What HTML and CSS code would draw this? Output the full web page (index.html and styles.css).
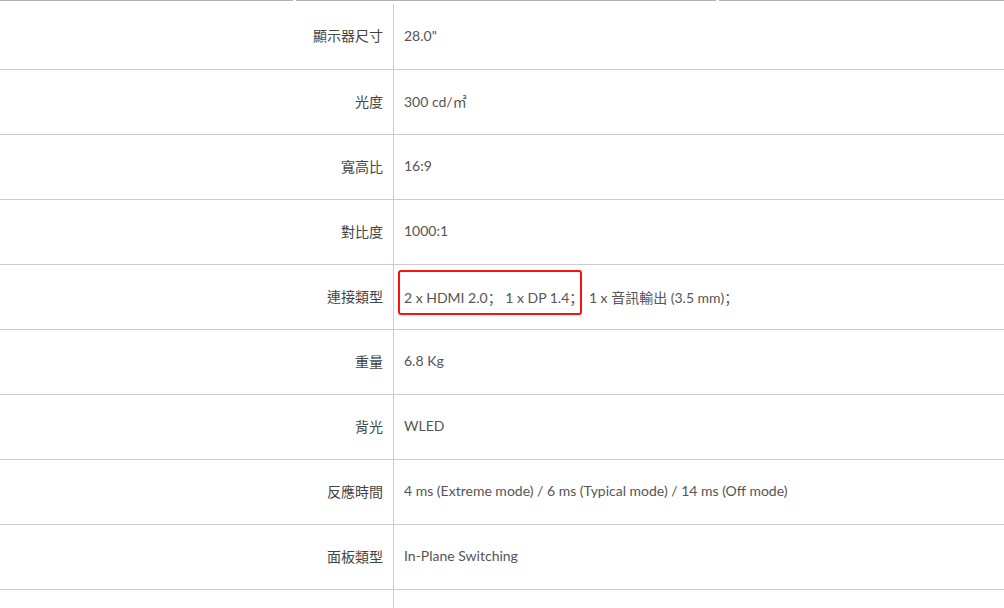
FILE: index.html
```html
<!DOCTYPE html>
<html lang="zh-Hant">
<head>
    <meta charset="UTF-8">
    <meta name="viewport" content="width=device-width, initial-scale=1.0">
    <title>規格</title>
    <link rel="stylesheet" href="styles.css">
</head>
<body>
    <div class="tab-line">
        <span class="seg seg-a"></span>
        <span class="seg seg-b"></span>
        <span class="seg seg-c"></span>
    </div>

    <table class="spec-table">
        <tbody>
            <tr>
                <th>顯示器尺寸</th>
                <td>28.0"</td>
            </tr>
            <tr>
                <th>光度</th>
                <td>300 cd/㎡</td>
            </tr>
            <tr>
                <th>寬高比</th>
                <td>16:9</td>
            </tr>
            <tr>
                <th>對比度</th>
                <td>1000:1</td>
            </tr>
            <tr>
                <th>連接類型</th>
                <td lang="zh-CN"><span class="mark">2 x HDMI 2.0；&nbsp;1 x DP 1.4<span class="semi-tight">；</span></span> 1 x 音訊輸出 (3.5 mm)；</td>
            </tr>
            <tr>
                <th>重量</th>
                <td>6.8 Kg</td>
            </tr>
            <tr>
                <th>背光</th>
                <td>WLED</td>
            </tr>
            <tr>
                <th>反應時間</th>
                <td>4 ms (Extreme mode) / 6 ms (Typical mode) / 14 ms (Off mode)</td>
            </tr>
            <tr>
                <th>面板類型</th>
                <td>In-Plane Switching</td>
            </tr>
            <tr>
                <th></th>
                <td></td>
            </tr>
        </tbody>
    </table>
</body>
</html>
```

FILE: styles.css
```css
body {
    margin: 0;
    padding: 0;
    background: #fff;
    font-family: Lato, "Noto Sans CJK SC", sans-serif;
    font-size: 14px;
    color: #555;
}

.tab-line {
    display: flex;
    gap: 3px;
    height: 1px;
    margin-bottom: 3px;
}

.seg {
    display: block;
    height: 1px;
    background: #b3b3b3;
}

.seg-a {
    width: 293px;
}

.seg-b {
    width: 420px;
}

.seg-c {
    flex: 1;
}

.spec-table {
    width: 100%;
    border-collapse: collapse;
}

.spec-table tr {
    height: 65px;
    border-bottom: 1px solid #cccccc;
}

.spec-table th {
    width: 383px;
    padding: 0 10px 2px 0;
    text-align: right;
    font-weight: normal;
    color: #444;
    border-right: 1px solid #cccccc;
}

.spec-table td {
    padding: 0 0 2px 10px;
    text-align: left;
    color: #555;
    white-space: nowrap;
}

.mark {
    display: inline-block;
    margin: -15px 3px -8px -6px;
    padding: 15px 0 6px 4px;
    border: 2px solid #ff1010;
    border-radius: 3px;
    white-space: nowrap;
}

.semi-tight {
    margin-right: -3px;
}
```
